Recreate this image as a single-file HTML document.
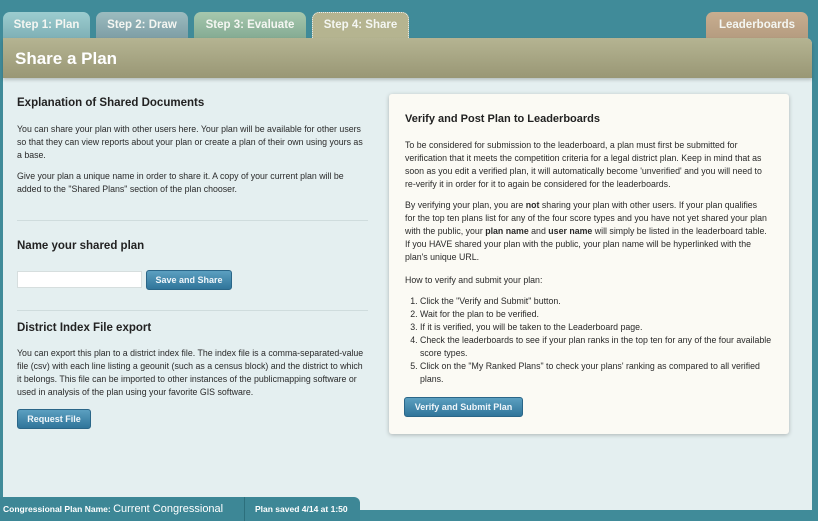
<!DOCTYPE html>
<html><head><meta charset="utf-8"><style>
*{margin:0;padding:0;box-sizing:border-box}
body{width:818px;height:521px;overflow:hidden;background:#408b99;font-family:"Liberation Sans",Arial,sans-serif;position:relative}
.tab{position:absolute;top:12px;height:26px;border-radius:7px 7px 0 0;color:#f4f6f2;font-weight:bold;font-size:11.5px;line-height:26px;text-align:center}
.panel{position:absolute;left:3px;top:38px;width:809px;height:472px;background:#e4eff0;border-radius:0 6px 0 0}
.hdr{position:absolute;left:0;top:0;width:100%;height:40px;background:linear-gradient(#b5b492,#999775);border-radius:0 6px 0 0;box-shadow:0 2px 3px rgba(0,0,0,.2)}
.hdr span{position:absolute;left:12px;top:11px;color:#fff;font-weight:bold;font-size:17px}
.a{position:absolute;font-size:8.8px;color:#2a2a2a;line-height:13px}
h3{position:absolute;font-size:11.5px;font-weight:bold;color:#222}
.hr{position:absolute;left:17px;width:351px;height:1px;background:#cfdcdd}
.btn{position:absolute;height:20px;background:linear-gradient(#5b9fc0,#30759a);border:1px solid #2a6688;border-radius:3px;color:#f0f6fa;font-weight:bold;font-size:9px;text-align:center;line-height:18px}
.card{position:absolute;left:389px;top:94px;width:400px;height:340px;background:#fbfaf4;border-radius:3px;box-shadow:0 1px 4px rgba(0,0,0,.25)}
ol{position:absolute;left:16px;top:201px;width:370px;font-size:8.8px;color:#2a2a2a;line-height:13px;padding-left:15px}
</style></head><body>
<div class="tab" style="left:3px;width:87px;background:linear-gradient(#9ccdd0,#7fb0b6)">Step 1: Plan</div>
<div class="tab" style="left:96px;width:92px;background:linear-gradient(#9cbcc0,#7e9ea5)">Step 2: Draw</div>
<div class="tab" style="left:194px;width:112px;background:linear-gradient(#a6c8ae,#85ab93)">Step 3: Evaluate</div>
<div class="tab" style="left:312px;width:97px;background:#b5b490;border:1px dotted #e8eef0;border-bottom:none;line-height:24px">Step 4: Share</div>
<div class="tab" style="left:706px;width:102px;background:linear-gradient(#c8ae90,#b59c80)">Leaderboards</div>
<div class="panel">
<div class="hdr"><span>Share a Plan</span></div>
</div>
<h3 style="left:17px;top:97px">Explanation of Shared Documents</h3>
<div class="a" style="left:17px;top:123px;width:352px">You can share your plan with other users here. Your plan will be available for other users so that they can view reports about your plan or create a plan of their own using yours as a base.</div>
<div class="a" style="left:17px;top:170px;width:352px">Give your plan a unique name in order to share it. A copy of your current plan will be added to the "Shared Plans" section of the plan chooser.</div>
<div class="hr" style="top:220px"></div>
<h3 style="left:17px;top:240px">Name your shared plan</h3>
<div style="position:absolute;left:17px;top:271px;width:125px;height:17px;background:#fff;border:1px solid #d6dede"></div>
<div class="btn" style="left:146px;top:270px;width:86px">Save and Share</div>
<div class="hr" style="top:310px"></div>
<h3 style="left:17px;top:322px">District Index File export</h3>
<div class="a" style="left:17px;top:347px;width:350px">You can export this plan to a district index file. The index file is a comma-separated-value file (csv) with each line listing a geounit (such as a census block) and the district to which it belongs. This file can be imported to other instances of the publicmapping software or used in analysis of the plan using your favorite GIS software.</div>
<div class="btn" style="left:17px;top:409px;width:74px">Request File</div>
<div class="card">
<h3 style="left:16px;top:19px;font-size:11px">Verify and Post Plan to Leaderboards</h3>
<div class="a" style="left:16px;top:45px;width:364px">To be considered for submission to the leaderboard, a plan must first be submitted for verification that it meets the competition criteria for a legal district plan. Keep in mind that as soon as you edit a verified plan, it will automatically become 'unverified' and you will need to re-verify it in order for it to again be considered for the leaderboards.</div>
<div class="a" style="left:16px;top:105px;width:364px">By verifying your plan, you are <b>not</b> sharing your plan with other users. If your plan qualifies for the top ten plans list for any of the four score types and you have not yet shared your plan with the public, your <b>plan name</b> and <b>user name</b> will simply be listed in the leaderboard table. If you HAVE shared your plan with the public, your plan name will be hyperlinked with the plan's unique URL.</div>
<div class="a" style="left:16px;top:180px;width:372px">How to verify and submit your plan:</div>
<ol><li>Click the "Verify and Submit" button.</li><li>Wait for the plan to be verified.</li><li>If it is verified, you will be taken to the Leaderboard page.</li><li>Check the leaderboards to see if your plan ranks in the top ten for any of the four available score types.</li><li>Click on the "My Ranked Plans" to check your plans' ranking as compared to all verified plans.</li></ol>
<div class="btn" style="left:15px;top:303px;width:119px">Verify and Submit Plan</div>
</div>
<div style="position:absolute;left:0;top:497px;width:360px;height:24px;background:#3d8796;border-radius:0 6px 0 0;color:#fff;font-size:8.5px;font-weight:bold;line-height:24px">
<span style="position:absolute;left:3px;top:0;white-space:nowrap">Congressional Plan Name: <span style="font-weight:normal;font-size:11px">Current Congressional</span></span>
<span style="position:absolute;left:244px;top:0;width:1px;height:24px;background:#2c6f7c"></span>
<span style="position:absolute;left:255px;top:0;white-space:nowrap">Plan saved 4/14 at 1:50</span>
</div>
</body></html>
